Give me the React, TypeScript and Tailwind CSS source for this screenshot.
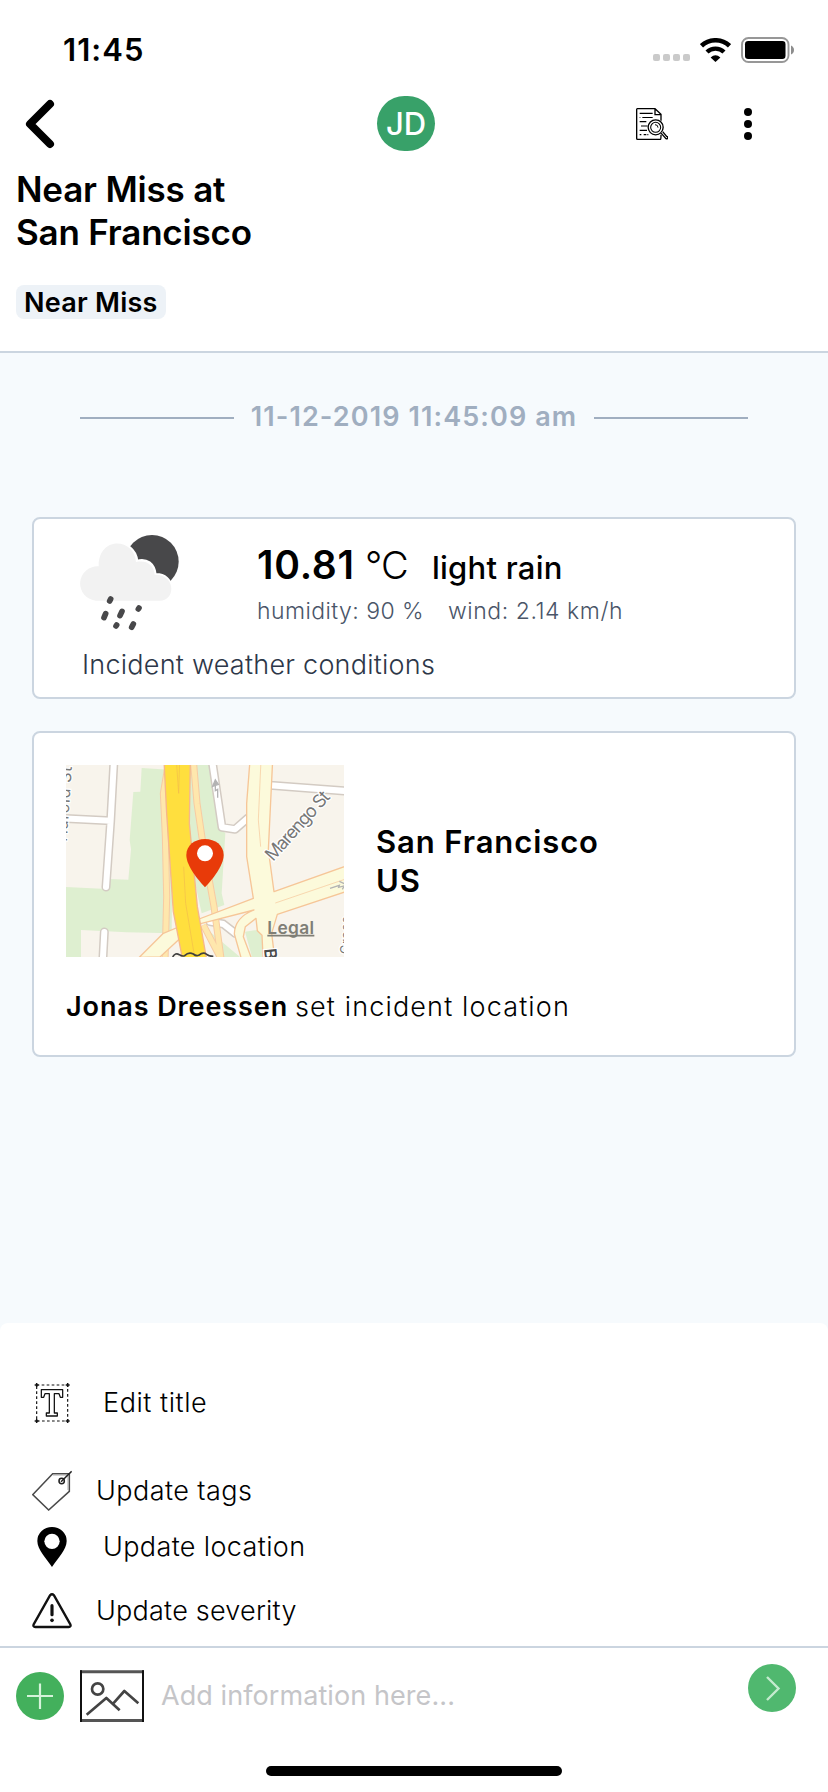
import type { ReactNode } from "react";

function StatusBar() {
  return (
    <div className="flex h-24 items-center pt-1 pl-[63px]">
      <span className="w-[590px] text-[31px] leading-10 font-semibold tracking-[1.06px]">11:45</span>
      <svg className="h-6 w-[37px]" viewBox="0 0 37 24" fill="#cacaca">
        <rect x="0" y="16" width="7" height="7" rx="2" />
        <rect x="10" y="16" width="7" height="7" rx="2" />
        <rect x="20" y="16" width="7" height="7" rx="2" />
        <rect x="30" y="16" width="7" height="7" rx="2" />
      </svg>
      <svg className="ml-[10px] h-6 w-[31px]" viewBox="0 0 31 24">
        <path d="M1.5 7.8 A20.5 20.5 0 0 1 29.5 7.8" fill="none" stroke="#000" strokeWidth="4.6" />
        <path d="M7 14 A12.4 12.4 0 0 1 24 14" fill="none" stroke="#000" strokeWidth="4.4" />
        <path d="M10.6 19.4 Q15.5 15.2 20.4 19.4 L15.5 24 Z" />
      </svg>
      <svg className="ml-[10px] h-[26px] w-[54px]" viewBox="0 0 54 26">
        <rect x="1" y="1" width="46.5" height="24" rx="6.5" fill="none" stroke="#979797" strokeWidth="1.9" />
        <rect x="4" y="4" width="40.5" height="18" rx="3.2" />
        <path d="M50 8.5 Q53 10 53 13 Q53 16 50 17.5 Z" fill="#8d8d8d" />
      </svg>
    </div>
  );
}

function DocumentSearchIcon() {
  return (
    <svg className="ml-[201px] h-8 w-8" viewBox="108 324 96 96" fill="none" stroke="#000" strokeWidth="4">
      <path d="M164 326H112q-2 0-2 2.500v87q0 2.500 3 2.500h69q1 0 1-14M183 362v-19l-18-17v18h18" />
      <path d="M119 340h39M127 352.500h31M119 365h20M123 378h20M119 391h22M131 404h8M119 404h5M119 352.500h2M142 404h3" strokeWidth="3.400" />
      <circle cx="167" cy="382" r="22.500" fill="#fff" />
      <circle cx="167" cy="382" r="15" strokeWidth="3.200" />
      <path d="M165 374q9 0 9 9" strokeWidth="2.800" />
      <path d="M182 398l16 18q4 2 5-2t-3-5l-12-14" fill="#fff" strokeWidth="4" />
    </svg>
  );
}

function NavBar() {
  return (
    <div className="flex h-[55px] items-center pl-[25px]">
      <svg className="h-[50px] w-[30px]" viewBox="25 99 30 50" fill="none" stroke="#000" strokeWidth="8" strokeLinecap="round" strokeLinejoin="round">
        <path d="M50 104 30 124 50 144" />
      </svg>
      <div className="ml-[322px] flex h-[55px] w-[58px] items-center justify-center rounded-full bg-[#38a169] pt-px text-[31px] font-medium text-white">
        JD
      </div>
      <DocumentSearchIcon />
      <svg className="ml-[76px] h-8 w-2" viewBox="0 0 8 32">
        <circle cx="4" cy="4" r="4" />
        <circle cx="4" cy="16" r="4" />
        <circle cx="4" cy="28" r="4" />
      </svg>
    </div>
  );
}

function WeatherIcon() {
  return (
    <svg className="h-[105px] w-[100px]" viewBox="180 90 300 315">
      <circle cx="396" cy="185" r="80" fill="#48484a" />
      <path
        d="M228 302a50 50 0 0 1 8-103c-2-90 107-88 115-16 30-8 51 8 55 40 60-2 64 79 15 79z"
        fill="#fff" stroke="#fff" strokeWidth="8"
      />
      <path
        d="M228 302a51 51 0 0 1 8-103c-2-90 107-88 112-13 32-6 53 8 56 38 64-2 64 78 15 78z"
        fill="#f2f2f2"
      />
      <g stroke="#48484a" strokeWidth="17" strokeLinecap="round">
        <path d="M272 297l-3 6M257 341l-5 12M306 334l-6 13M357 324l-2 3M290 375l-2 3M340 372l-5 10" />
      </g>
    </svg>
  );
}

function WeatherCard() {
  return (
    <section className="h-[182px] rounded-[8px] border-2 border-[#cbd5e0] bg-white pt-[11px] pl-[46px]">
      <div className="flex">
        <WeatherIcon />
        <div className="ml-[77px] h-[105px]">
          <div className="mb-px flex h-[70px] items-baseline">
            <span className="w-[108px] text-[39px] leading-[70px] font-semibold tracking-[0.75px]">10.81</span>
            <span className="w-[67px] text-[38px] leading-none font-light tracking-[-0.8px]">°C</span>
            <span className="text-[31px] leading-none font-medium tracking-[0.24px]">light rain</span>
          </div>
          <div className="flex text-[23px] leading-[21px] font-light text-[#4a5568]">
            <span className="w-[191px] tracking-[0.43px]">humidity: 90 %</span>
            <span className="tracking-[0.55px]">wind: 2.14 km/h</span>
          </div>
        </div>
      </div>
      <p className="pl-0.5 text-[27px] leading-[59px] font-light tracking-[0.24px] text-[#2d3748]">
        Incident weather conditions
      </p>
    </section>
  );
}

function StreetMap() {
  return (
    <svg className="h-[192px] w-[278px]" viewBox="48 45 834 576">
      <rect x="48" y="45" width="834" height="576" fill="#f8f4ec" />
      <path d="M275 54 370 60 365 550 230 547 93 540V621H48V411L155 416 158 386 235 389 243 298 239 270 250 126 271 125Z" fill="#deefd0" />
      <path d="M418 45H478L500 170 512 235 526 250 515 430 523 465 455 490 420 330Z" fill="#deefd0" />
      <path d="M585 545 620 540 636 556V621H606Z M460 540 480 545 570 621H510Z" fill="#deefd0" />
      <g fill="none" strokeLinejoin="round">
        <g stroke="#d3cbc3" strokeWidth="27" strokeLinecap="round">
          <path d="M192 30 182 212 168 411M40 205 182 212M163 546 158 640" />
          <path d="M486 30 516 232 555 238 594 204M660 106 900 124" />
          <path d="M480 515 520 522 556 550" />
        </g>
        <g stroke="#fff" strokeWidth="18" strokeLinecap="round">
          <path d="M192 30 182 212 168 411M40 205 182 212M163 546 158 640" />
          <path d="M486 30 516 232 555 238 594 204M660 106 900 124" />
          <path d="M480 515 520 522 556 550" />
        </g>
        <g stroke="#f7cba2" strokeWidth="21">
          <path d="M352 60 340 130 346 260 350 440 345 640M430 30 441 160 460 290 492 470 515 640M460 525 520 640" />
        </g>
        <g stroke="#fee7ad" strokeWidth="15">
          <path d="M352 60 340 130 346 260 350 440 345 640M430 30 441 160 460 290 492 470 515 640M460 525 520 640" />
        </g>
      </g>
      <g stroke="#f6c698" strokeWidth="4" strokeLinejoin="round">
        <path d="M268 622 340 550 400 525 610 445 590 320V160L600 30H668L655 300 672 425 900 344V421L682 493 665 550 676 640H640L636 556 622 542 618 505 586 530 580 560 610 640H578L553 552C554 515 580 492 612 480L455 520 395 545 385 570 330 621Z" fill="#fcfadb" />
        <path d="M633 30 625 210 632 290M676 459 890 386" fill="none" strokeWidth="2" />
        <path d="M342 30H421L418 220 442 470 472 640H400L370 485 350 190Z" fill="#ffdf3e" stroke="#f6b78a" />
        <path d="M379 30 386 130 389 30M401 350 407 460 432 610" fill="none" stroke="#f3bd4c" strokeWidth="2" />
      </g>
      <path d="M368 621q8-14 20-7 8 6 16 3 12-12 26-5 8 7 16 4 14-11 24-3 6 6 20 6" fill="none" stroke="#3f3f3f" strokeWidth="5" />
      <g fill="none" stroke="#b3b3b3" strokeWidth="4">
        <path d="M488 109 496 90 505 103Z" fill="#b3b3b3" />
        <path d="M496 105V122L503 118V143M840 415 868 406 866 412 884 407M868 394 886 402 877 418" />
      </g>
      <g fontFamily="Inter, sans-serif" fill="#777" stroke="#fff" strokeWidth="7" paintOrder="stroke">
        <text x="669" y="336" fontSize="54" textLength="260" transform="rotate(-48 669 336)">Marengo St</text>
        <text x="50" y="276" fontSize="48" textLength="226" transform="rotate(-86 50 276)">Harold St</text>
        <text x="642" y="597" fontSize="51" fontWeight="600" fill="#4b4b4b" transform="rotate(84 642 597)">B</text>
        <text x="899" y="612" fontSize="38" textLength="112" transform="rotate(-90 899 612)">Cross</text>
      </g>
      <text x="652" y="553" fontSize="52" textLength="140" fontWeight="600" fontFamily="Inter, sans-serif" fill="#7f7e76">Legal</text>
      <path d="M652 557H793" stroke="#7f7e76" strokeWidth="5" />
      <path d="M465 412C444 389 409 348 409 315C409 286 434 267 465 267S521 286 521 315C521 348 486 389 465 412Z" fill="#e83a09" />
      <circle cx="465" cy="310" r="24" fill="#fff" />
    </svg>
  );
}

function LocationCard() {
  return (
    <section className="mt-8 h-[326px] rounded-[8px] border-2 border-[#cbd5e0] bg-white px-8 pt-8">
      <div className="flex items-center">
        <StreetMap />
        <p className="ml-8 text-[31px] leading-[39.5px] font-semibold tracking-[0.9px]">
          San Francisco
          <br />
          US
        </p>
      </div>
      <p className="flex text-[27px] leading-[100px]">
        <span className="w-[229px] font-semibold tracking-[0.9px]">Jonas Dreessen</span>
        <span className="font-light tracking-[1.14px]">set incident location</span>
      </p>
    </section>
  );
}

function ActionRow({ icon, label, className }: { icon: ReactNode; label: string; className: string }) {
  return (
    <div className={`flex h-[41px] items-center text-[27px] font-light ${className}`}>
      {icon}
      <span className="pt-0.5">{label}</span>
    </div>
  );
}

const editIcon = (
  <svg className="h-[41px] w-10" viewBox="96 246 120 123" fill="none" stroke="#111">
    <rect x="110" y="255" width="93" height="108" strokeWidth="3.500" strokeDasharray="8 7" />
    <path d="M104 255h12M110 249v12M197 255h12M203 249v12M104 363h12M110 357v12M197 363h12M203 357v12" strokeWidth="4.500" />
    <path d="M124 269h64v23h-7l-4-11h-14v58h9v9h-33v-9h9v-58h-13l-4 11h-7z" strokeWidth="3.800" strokeLinejoin="round" />
  </svg>
);

const tagIcon = (
  <svg className="h-[41px] w-10" viewBox="96 510 120 123" fill="none" stroke="#4a4a4a" strokeWidth="4.600">
    <path d="M98 584 158 521H208V574L146 630Z" />
    <path d="M159 525H205M204 524V570" stroke="#aaa" strokeWidth="3" />
    <circle cx="185" cy="543" r="8" stroke="#222" />
    <path d="M183 545 215 514" stroke="#222" strokeWidth="4.500" />
  </svg>
);

const pinIcon = (
  <svg className="h-[41px] w-10" viewBox="96 678 120 123">
    <path d="M156 801C139 774 112 750 112 723A44 42 0 0 1 200 723C200 750 173 774 156 801Z" />
    <circle cx="156" cy="724" r="23" fill="#fff" />
  </svg>
);

const severityIcon = (
  <svg className="h-[41px] w-10" viewBox="96 870 120 123" fill="none" stroke="#111" strokeWidth="7" strokeLinejoin="round" strokeLinecap="round">
    <path d="M150 886Q156 880 162 886L211 973Q214 980.500 206 981H106Q98 980.500 101 973Z" />
    <path d="M156 917V944" strokeWidth="9.500" />
    <circle cx="156" cy="961" r="5.500" fill="#111" stroke="none" />
  </svg>
);

function ActionSheet() {
  return (
    <section className="h-[323px] rounded-t-[8px] bg-white pt-[59px] pl-8">
      <ActionRow icon={editIcon} label="Edit title" className="gap-[31px] tracking-[0.56px]" />
      <ActionRow icon={tagIcon} label="Update tags" className="mt-[47px] gap-6 tracking-[0.44px]" />
      <ActionRow icon={pinIcon} label="Update location" className="mt-[15px] gap-[31px] tracking-[0.36px]" />
      <ActionRow icon={severityIcon} label="Update severity" className="mt-[23px] gap-6 tracking-[0.22px]" />
    </section>
  );
}

function Composer() {
  return (
    <footer className="h-[146px] border-t-2 border-[#cbd5e0] bg-white">
      <div className="flex h-24 items-center px-4 pr-8">
        <svg className="size-12" viewBox="0 0 48 48">
          <circle cx="24" cy="24" r="24" fill="#43b05c" />
          <path d="M11 24H37M24 11.500V37" stroke="#d5f3da" strokeWidth="2.200" />
        </svg>
        <svg className="ml-4 h-[52px] w-16" viewBox="240 119 192 156" fill="none" stroke="#444" strokeWidth="8">
          <path d="M240 124.500H432M240 270.500H432" stroke="#555" strokeWidth="9" />
          <path d="M243 120V275M429 120V275" stroke="#111" strokeWidth="6" />
          <circle cx="293" cy="176" r="17" />
          <path d="M260 253 319 203 359 240M340 219 373 182 415 219" strokeLinejoin="round" />
        </svg>
        <span className="ml-[17px] text-[27px] tracking-[0.08px] text-[#c5c5c8]">Add information here...</span>
        <svg className="mb-4 ml-auto size-12" viewBox="0 0 48 48">
          <circle cx="24" cy="24" r="24" fill="#50b86f" />
          <path d="M19 13 30.500 24.500 19 36" fill="none" stroke="#c5ebcf" strokeWidth="2.400" />
        </svg>
      </div>
      <div className="mx-auto mt-[22px] h-[10px] w-[296px] rounded-full bg-black" />
    </footer>
  );
}

export default function App() {
  return (
    <div className="h-[1792px] w-[828px] overflow-hidden bg-[#f6fafd] font-['Inter',sans-serif] text-black">
      <header className="h-[353px] border-b-2 border-[#cbd5e0] bg-white">
        <StatusBar />
        <NavBar />
        <div className="px-4 pt-[17px]">
          <h1 className="text-[35px] leading-[43px] font-semibold tracking-[-0.2px]">
            Near Miss at
            <br />
            San Francisco
          </h1>
          <span className="mt-[31px] flex h-[34px] w-[150px] items-center rounded-[8px] bg-[#edf2f7] pt-0.5 pl-2 text-[27px] font-semibold tracking-[0.25px]">
            Near Miss
          </span>
        </div>
      </header>
      <main className="h-[970px] px-8 pt-12">
        <div className="mb-[84px] flex h-8 items-center justify-between px-12 text-[27px] font-semibold text-[#a0aec0]">
          <span className="mt-0.5 h-0.5 w-[154px] bg-[#a0aec0]" />
          <span className="tracking-[1.1px]">11-12-2019 11:45:09 am</span>
          <span className="mt-0.5 h-0.5 w-[154px] bg-[#a0aec0]" />
        </div>
        <WeatherCard />
        <LocationCard />
      </main>
      <ActionSheet />
      <Composer />
    </div>
  );
}
